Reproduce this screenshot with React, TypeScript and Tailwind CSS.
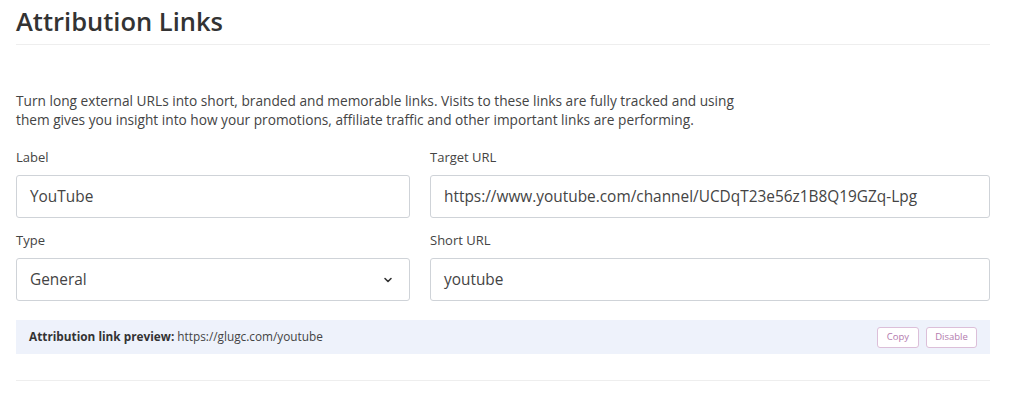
import { ChevronDown } from "lucide-react";

const font = { fontFamily: '"Open Sans", "Noto Sans", sans-serif' };

function Field({ label, value, select }: { label: string; value: string; select?: boolean }) {
  return (
    <div className="flex flex-col">
      <label className="text-[13px] leading-[20px] text-[#444] mb-[8px]">{label}</label>
      <div className="h-[43px] border border-[#cfd3d8] rounded-[3px] bg-white flex items-center justify-between pl-[13px] pr-[15px]">
        <span className="text-[15.4px] text-[#444]">{value}</span>
        {select && <ChevronDown size={12} strokeWidth={3.2} className="text-[#333]" />}
      </div>
    </div>
  );
}

export default function App() {
  return (
    <div className="bg-white w-[1024px] h-[396px] overflow-hidden" style={font}>
      <div className="ml-4 w-[974px]">
        {/* HEADER */}
        <div className="pt-[4px] pb-[6px] border-b border-[#eeeeee]">
          <h1 className="text-[25.5px] leading-[34px] font-semibold text-[#333]">Attribution Links</h1>
        </div>

        {/* DESCRIPTION */}
        <p className="mt-[46px] text-[13.7px] leading-[19px] text-[#444]">
          Turn long external URLs into short, branded and memorable links. Visits to these links are fully tracked and using
          <br />
          them gives you insight into how your promotions, affiliate traffic and other important links are performing.
        </p>

        {/* FORM */}
        <div className="mt-[18px] grid grid-cols-[394px_560px] gap-x-5 gap-y-[12px]">
          <Field label="Label" value="YouTube" />
          <Field label="Target URL" value="https://www.youtube.com/channel/UCDqT23e56z1B8Q19GZq-Lpg" />
          <Field label="Type" value="General" select />
          <Field label="Short URL" value="youtube" />
        </div>

        {/* PREVIEW */}
        <div className="mt-[19px] h-[34px] bg-[#eef2fb] flex items-center justify-between pl-[13px] pr-[13px]">
          <p className="text-[11.8px] text-[#444]">
            <span className="font-bold text-[#333]">Attribution link preview:</span> https://glugc.com/youtube
          </p>
          <div className="flex gap-[7px]">
            <button className="h-[21px] w-[42px] rounded-[3px] border border-[#dcbfd9] bg-white text-[9.5px] text-[#b37aae]">Copy</button>
            <button className="h-[21px] w-[51px] rounded-[3px] border border-[#dcbfd9] bg-white text-[9.5px] text-[#b37aae]">Disable</button>
          </div>
        </div>

        <div className="mt-[26px] border-b border-[#eeeeee]" />
      </div>
    </div>
  );
}
